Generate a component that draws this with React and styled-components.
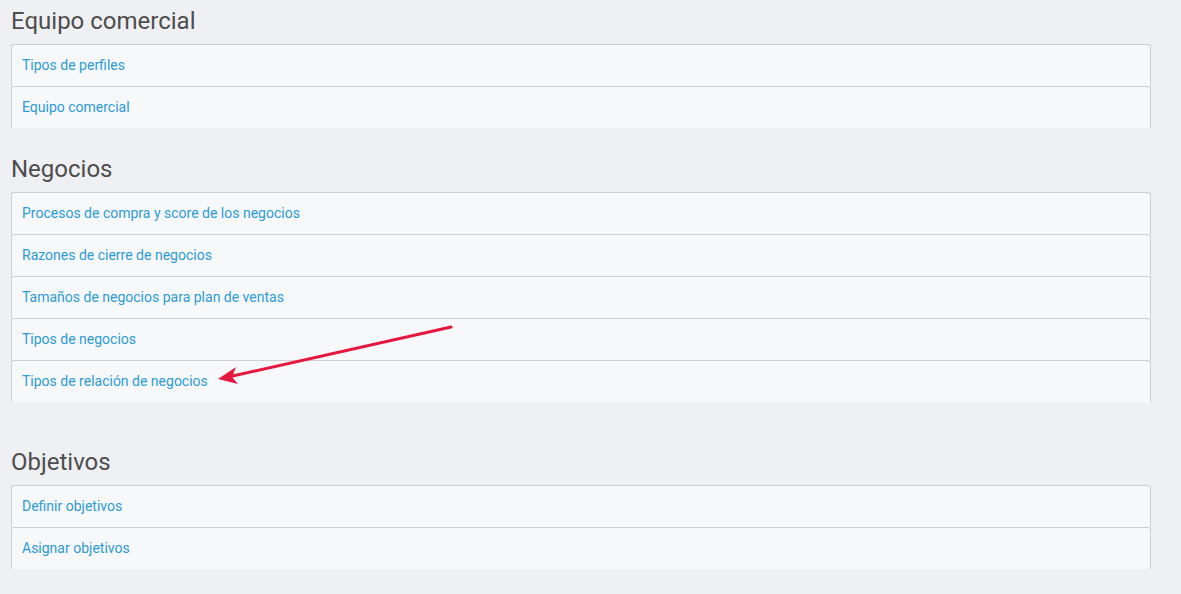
import React from 'react'
import styled, { createGlobalStyle } from 'styled-components'

const GlobalStyle = createGlobalStyle`
  html, body {
    margin: 0;
    padding: 0;
    background: #eff0f4;
    font-family: Roboto, 'Liberation Sans', sans-serif;
  }
`

const sections = [
  {
    title: 'Equipo comercial',
    items: ['Tipos de perfiles', 'Equipo comercial'],
  },
  {
    title: 'Negocios',
    spaced: true,
    items: [
      'Procesos de compra y score de los negocios',
      'Razones de cierre de negocios',
      'Tamaños de negocios para plan de ventas',
      'Tipos de negocios',
      'Tipos de relación de negocios',
    ],
  },
  {
    title: 'Objetivos',
    items: ['Definir objetivos', 'Asignar objetivos'],
  },
]

const Page = styled.div`
  position: relative;
  padding: 7px 30px 20px 11px;
  min-height: 594px;
  box-sizing: border-box;
`

const Section = styled.section`
  margin-bottom: ${(props) => (props.spaced ? '46px' : '27px')};
`

const Title = styled.h2`
  margin: 0 0 9px 0;
  font-size: 24px;
  line-height: 28px;
  font-weight: 400;
  color: #4d4d4d;
`

const List = styled.div`
  display: flex;
  flex-direction: column;
`

const Row = styled.a`
  display: block;
  height: 42px;
  box-sizing: border-box;
  padding: 10px 10px 0;
  background: #f7f8fa;
  border: 1px solid #cfd0d3;
  border-bottom: none;
  border-radius: 3px 3px 0 0;
  font-size: 14px;
  line-height: 20px;
  color: #2d9bd5;
  text-decoration: none;
  cursor: pointer;
`

const Arrow = styled.svg`
  position: absolute;
  left: 0;
  top: 0;
  pointer-events: none;
`

const App = () => {
  return (
    <Page>
      <GlobalStyle />
      {sections.map((s) => (
        <Section key={s.title} spaced={s.spaced}>
          <Title>{s.title}</Title>
          <List>
            {s.items.map((item) => (
              <Row key={item}>{item}</Row>
            ))}
          </List>
        </Section>
      ))}
      <Arrow width='1181' height='594' viewBox='0 0 1181 594'>
        <line
          x1='451'
          y1='327'
          x2='228'
          y2='377'
          stroke='#e5173f'
          strokeWidth='3'
          strokeLinecap='round'
        />
        <path d='M218 379 L236 367 L232 377 L238 384 Z' fill='#e5173f' />
      </Arrow>
    </Page>
  )
}

export default App
